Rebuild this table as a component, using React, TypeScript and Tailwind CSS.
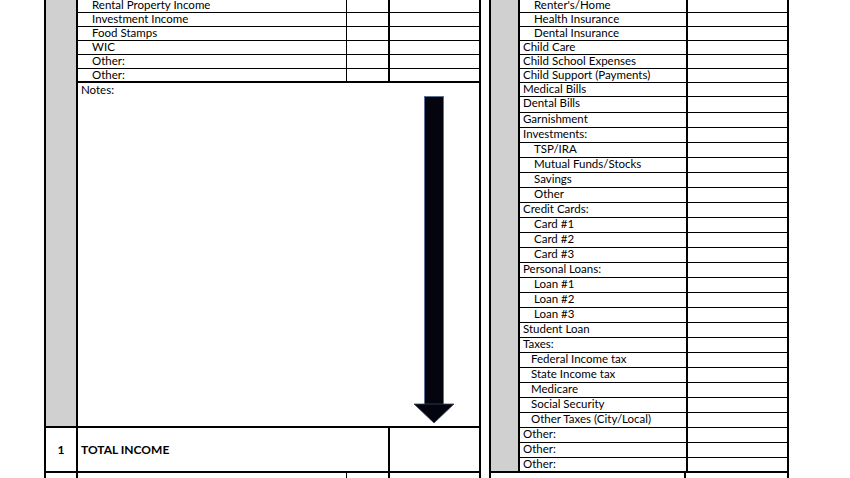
import React from "react";

type Row = { label: string; indent?: "none" | "sub" | "tax" };

const leftRows: Row[] = [
  { label: "Rental Property Income", indent: "sub" },
  { label: "Investment Income", indent: "sub" },
  { label: "Food Stamps", indent: "sub" },
  { label: "WIC", indent: "sub" },
  { label: "Other:", indent: "sub" },
  { label: "Other:", indent: "sub" },
];

const rightTop: Row[] = [
  { label: "Renter's/Home", indent: "sub" },
  { label: "Health Insurance", indent: "sub" },
  { label: "Dental Insurance", indent: "sub" },
  { label: "Child Care" },
  { label: "Child School Expenses" },
  { label: "Child Support (Payments)" },
  { label: "Medical Bills" },
];

const rightRest: Row[] = [
  { label: "Garnishment" },
  { label: "Investments:" },
  { label: "TSP/IRA", indent: "sub" },
  { label: "Mutual Funds/Stocks", indent: "sub" },
  { label: "Savings", indent: "sub" },
  { label: "Other", indent: "sub" },
  { label: "Credit Cards:" },
  { label: "Card #1", indent: "sub" },
  { label: "Card #2", indent: "sub" },
  { label: "Card #3", indent: "sub" },
  { label: "Personal Loans:" },
  { label: "Loan #1", indent: "sub" },
  { label: "Loan #2", indent: "sub" },
  { label: "Loan #3", indent: "sub" },
  { label: "Student Loan" },
  { label: "Taxes:" },
  { label: "Federal Income tax", indent: "tax" },
  { label: "State Income tax", indent: "tax" },
  { label: "Medicare", indent: "tax" },
  { label: "Social Security", indent: "tax" },
  { label: "Other Taxes (City/Local)", indent: "tax" },
  { label: "Other:" },
  { label: "Other:" },
];

function pad(indent?: Row["indent"]) {
  if (indent === "sub") return "pl-[14px]";
  if (indent === "tax") return "pl-[11px]";
  return "pl-[3px]";
}

function DownArrow() {
  return (
    <svg
      width="40"
      height="328"
      viewBox="0 0 40 328"
      className="absolute left-[336px] top-[13px]"
    >
      <rect x="10.5" y="0.5" width="19" height="309" fill="#04040e" stroke="#5d7190" strokeWidth="1" />
      <polygon points="0,308 40,308 20,327" fill="#04040e" stroke="#39465c" strokeWidth="0.8" />
    </svg>
  );
}

function IncomeTable() {
  return (
    <div className="w-[437px] border-x-2 border-black">
      <div className="flex border-b-2 border-black">
        <div className="w-[32px] shrink-0 border-r-2 border-black bg-[#d0d0d0]" />
        <div className="flex flex-1 flex-col">
          {leftRows.map((r, i) => (
            <div
              key={i}
              className={`flex h-[14px] border-black ${
                i === leftRows.length - 1 ? "border-b-2" : "border-b"
              }`}
            >
              <div
                className={`w-[269px] shrink-0 border-r border-black leading-[11px] ${pad(r.indent)}`}
              >
                {r.label}
              </div>
              <div className="w-[43px] shrink-0 border-r-2 border-black" />
              <div className="flex-1" />
            </div>
          ))}
          <div className="relative h-[343px] pl-[3px] leading-[13px]">
            Notes:
            <DownArrow />
          </div>
        </div>
      </div>
      <div className="flex h-[45px] border-b-2 border-black">
        <div className="flex w-[32px] shrink-0 items-center justify-center border-r-2 border-black text-[12px] font-bold">
          1
        </div>
        <div className="flex w-[312px] shrink-0 items-center border-r-2 border-black pl-[3px] text-[12px] font-bold">
          TOTAL INCOME
        </div>
        <div className="flex-1" />
      </div>
      <div className="flex h-[12px]">
        <div className="w-[32px] shrink-0 border-r-2 border-black" />
        <div className="w-[269px] shrink-0 border-r border-black" />
        <div className="w-[43px] shrink-0 border-r-2 border-black" />
        <div className="flex-1" />
      </div>
    </div>
  );
}

function ExpenseRow({ row, h, last }: { row: Row; h: string; last?: boolean }) {
  return (
    <div className={`flex ${h} border-black ${last ? "" : "border-b"}`}>
      <div
        className={`w-[168px] shrink-0 border-r-2 border-black leading-[11px] ${pad(row.indent)}`}
      >
        {row.label}
      </div>
      <div className="flex-1" />
    </div>
  );
}

function ExpenseTable() {
  return (
    <div className="w-[300px]">
      <div className="flex border-x-2 border-b-2 border-black">
        <div className="w-[29px] shrink-0 border-r-2 border-black bg-[#d0d0d0]" />
        <div className="flex flex-1 flex-col">
          {rightTop.map((r, i) => (
            <ExpenseRow key={i} row={r} h="h-[14px]" />
          ))}
          <ExpenseRow row={{ label: "Dental Bills" }} h="h-[16px]" />
          {rightRest.map((r, i) => (
            <ExpenseRow key={i} row={r} h="h-[15px]" />
          ))}
          <ExpenseRow row={{ label: "Other:" }} h="h-[13px]" last />
        </div>
      </div>
      <div className="flex h-[12px] border-x-2 border-black">
        <div className="w-[195px] shrink-0 border-r-2 border-black" />
        <div className="flex-1" />
      </div>
    </div>
  );
}

export default function App() {
  return (
    <div className="h-[478px] w-[850px] overflow-hidden bg-white font-['Lato',sans-serif] text-[11.5px] text-black">
      <div className="mt-[-1px] flex gap-[8px] pl-[44px]">
        <IncomeTable />
        <ExpenseTable />
      </div>
    </div>
  );
}
